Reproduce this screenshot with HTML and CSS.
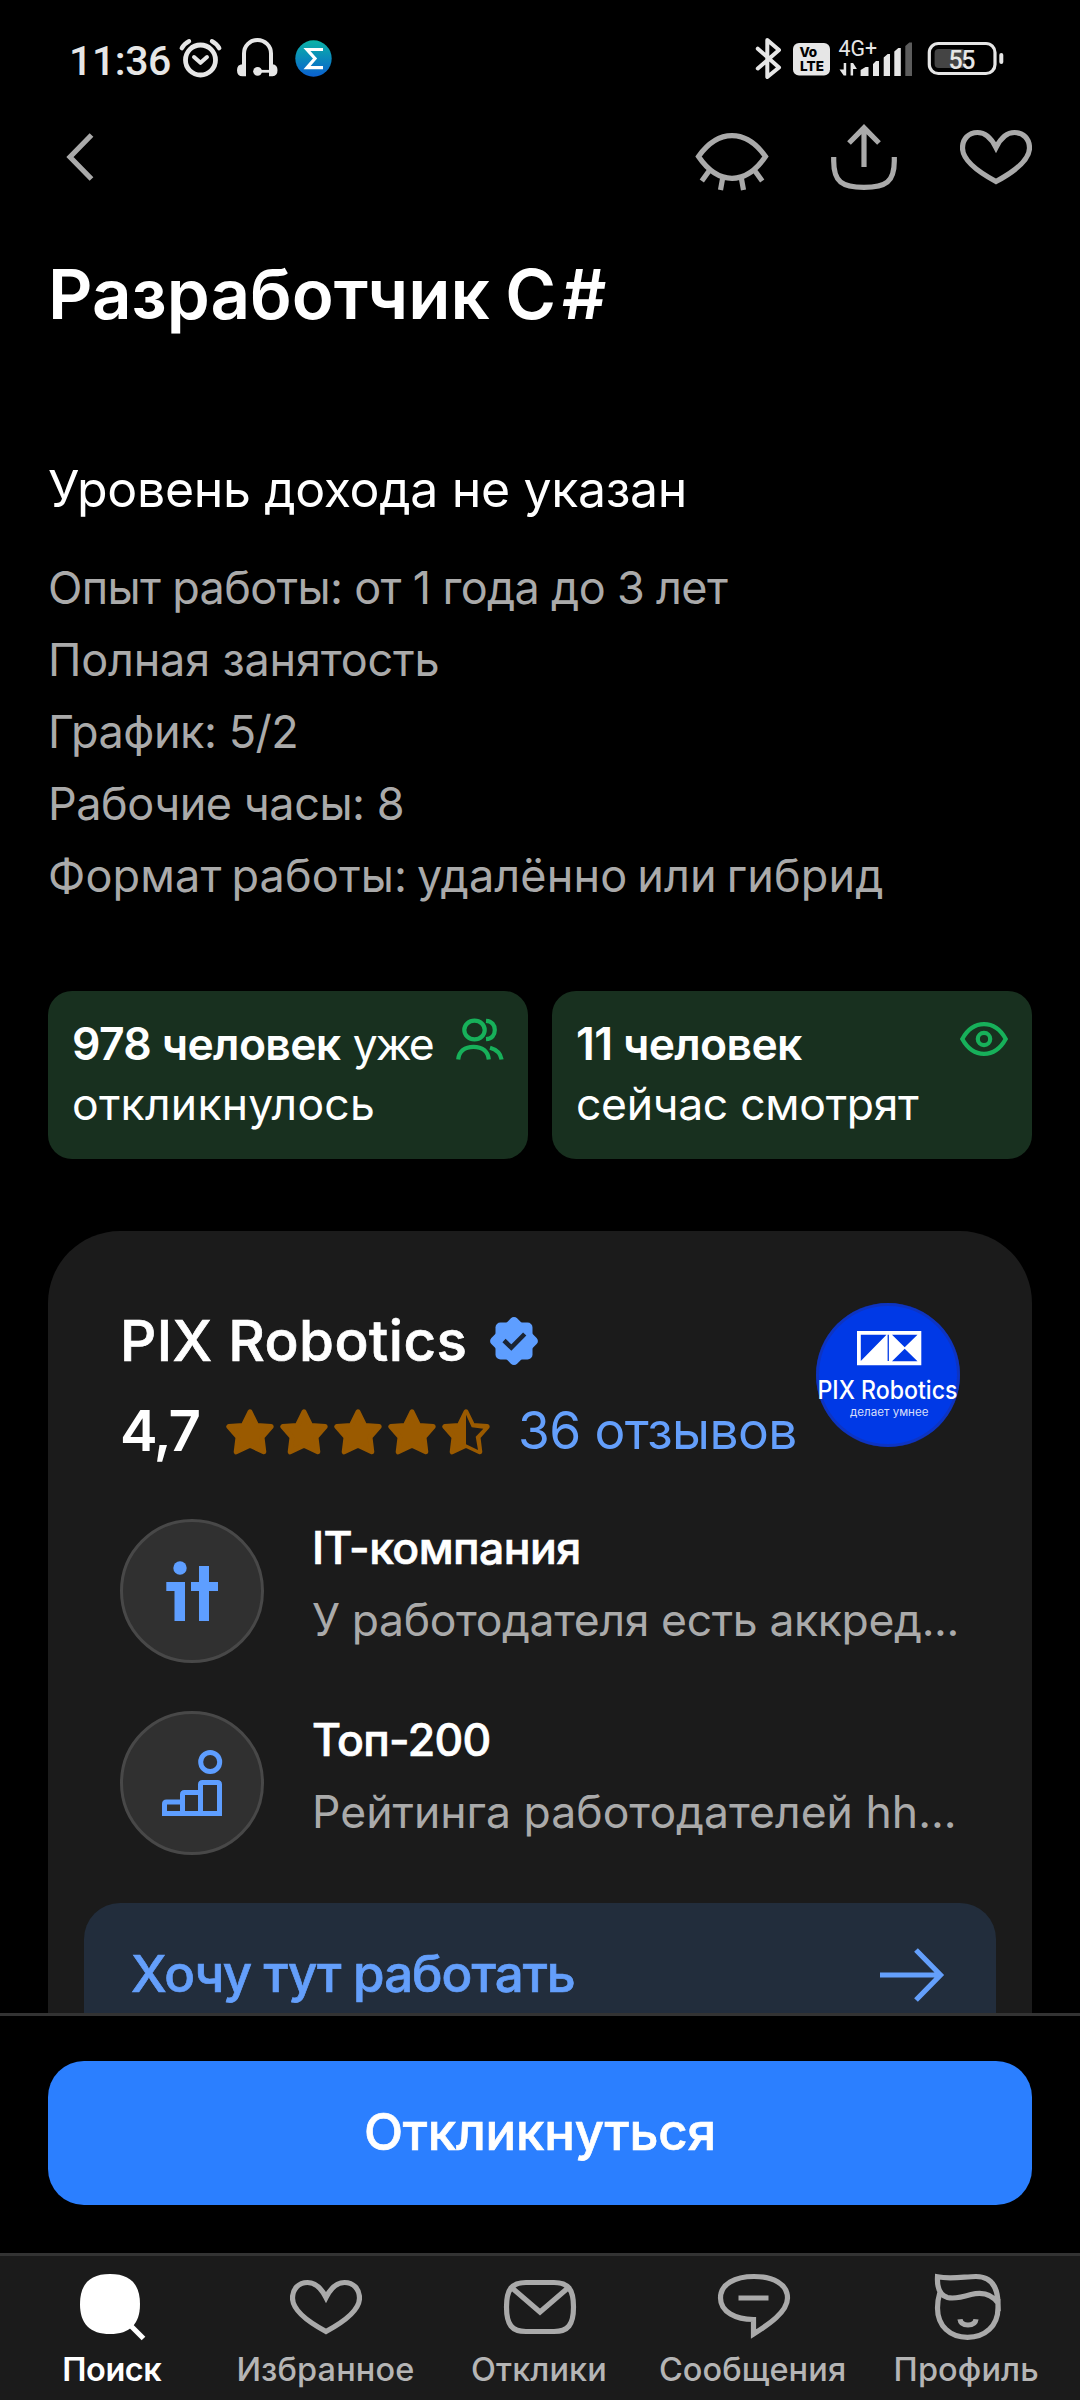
FILE: index.html
```html
<!DOCTYPE html>
<html lang="ru">
<head>
<meta charset="utf-8">
<title>Разработчик C#</title>
<link rel="stylesheet" href="styles.css">
</head>
<body>
<svg class="defs" aria-hidden="true">
  <defs>
    <symbol id="heart" viewBox="0 0 72 72"><path d="M36 26.5C32 18.5 25.5 11.5 17.5 11.5C8.5 11.5 2.5 18 2.5 27C2.5 41 22 53 36 60.5C50 53 69.5 41 69.5 27C69.5 18 63.5 11.5 54.5 11.5C46.5 11.5 40 18.5 36 26.5Z"/></symbol>
    <symbol id="star" viewBox="0 0 48 48"><path class="star-shape" d="M24 3.8L30.6 17.4L45.2 18.6L36 29.2L37.8 43.8L24 37.2L10.2 43.8L12 29.2L2.8 18.6L17.4 17.4Z"/></symbol>
  </defs>
</svg>

<header class="status-bar">
  <div class="status-left">
    <span class="clock">11:36</span>
    <svg class="status-icon" viewBox="0 0 48 48" fill="none" stroke="#e6e6e6" stroke-linecap="round">
      <circle cx="23.5" cy="26" r="15" stroke-width="4.8"/>
      <path d="M17 23l6.5 5.8L30 23" stroke-width="4" stroke-linejoin="round"/>
      <path d="M4.8 14.2Q7.5 9.5 12 7.3M42.2 14.2Q39.5 9.5 35 7.3" stroke-width="4.4"/>
    </svg>
    <svg class="status-icon" viewBox="0 0 48 48" fill="#e6e6e6">
      <path d="M11 36V19.5a13.5 13.5 0 0 1 27 0V36" fill="none" stroke="#e6e6e6" stroke-width="4"/>
      <path d="M13 30v12.3h-3.5q-5.5 0-5.5-6t5.5-6zM36 30v12.3h3.5q5-0.5 5-6t-5-6z"/>
      <circle cx="24.6" cy="37.3" r="4.4"/>
      <path d="M24 35.9h16v2.8H24z"/>
    </svg>
    <svg class="status-icon" viewBox="0 0 48 48">
      <defs><linearGradient id="sigma-bg" x1="0" y1="0" x2="0" y2="1"><stop offset="0" stop-color="#0bb3a6"/><stop offset="1" stop-color="#0a60d0"/></linearGradient></defs>
      <circle cx="24.5" cy="24.5" r="18.2" fill="url(#sigma-bg)"/>
      <path d="M34 15.5H18L26 24.5L18 33.7H34" fill="none" stroke="#fff" stroke-width="3.2"/>
    </svg>
  </div>
  <div class="status-right">
    <svg class="bluetooth" viewBox="0 0 30 48" fill="none" stroke="#e6e6e6" stroke-width="4" stroke-linejoin="round" stroke-linecap="round"><path d="M3.8 14.7L25 33.5L13.3 43V6L25 16L3.8 34.5"/></svg>
    <svg class="volte" viewBox="0 0 37 48">
      <rect y="9" width="37" height="32.5" rx="6" fill="#e6e6e6"/>
      <text x="6.5" y="23.3" textLength="17.5">Vo</text>
      <text x="7" y="37" textLength="24">LTE</text>
    </svg>
    <svg class="signal" viewBox="0 0 78 48" fill="#e6e6e6">
      <text x="0.5" y="21.7" textLength="38.5" lengthAdjust="spacingAndGlyphs">4G+</text>
      <path d="M5.7 29h2.5v12.5h-2.5L1.5 35.5h4.2zM12.6 41.5V29h2.5l3.8 6h-3.8v6.5z"/>
      <path d="M22.6 36l5-3h2.9v9h-7.9zM35 30l3-3h3v15h-6zM45.7 23.5l4-3.5H52v22h-6.3zM56.3 17.5l4-3.5h2.5v28h-6.5z"/>
      <path d="M67.3 12l4-3.5H74V42h-6.7z" fill="#5c5c5c"/>
    </svg>
    <svg class="battery" viewBox="0 0 78 48">
      <rect x="7.6" y="15" width="30.5" height="19" rx="4" fill="#444"/>
      <rect x="2.3" y="9.5" width="65.7" height="30" rx="9" fill="none" stroke="#e6e6e6" stroke-width="3.2"/>
      <rect x="72.3" y="19" width="4" height="11" rx="2" fill="#e6e6e6"/>
      <text x="21.5" y="35" textLength="27">55</text>
    </svg>
  </div>
</header>

<nav class="app-bar">
  <svg class="icon" viewBox="0 0 72 72"><path d="M43.5 14L22 36L43.5 58"/></svg>
  <div class="app-actions">
    <svg class="icon" viewBox="0 0 72 72"><path d="M2.5 35.5C10 25 21 14.7 36 14.7S62 25 69.5 35.5C62 46.5 51 57.3 36 57.3S10 46.5 2.5 35.5ZM13 50L5.8 60M26.5 58L24.5 69M45.5 58L47.5 69M59 50L66.2 60"/></svg>
    <svg class="icon" viewBox="0 0 72 72"><path d="M36 46V7M21 22L36 6.8L51 22M5.7 36V40C5.7 61 14 66.3 36 66.3S66.3 61 66.3 40V36"/></svg>
    <svg class="icon"><use href="#heart"/></svg>
  </div>
</nav>

<main class="content">
  <h1 class="title">Разработчик <span class="title-lang">C#</span></h1>
  <p class="income">Уровень дохода не указан</p>
  <ul class="details">
    <li class="tight">Опыт работы: от 1 года до 3 лет</li>
    <li>Полная занятость</li>
    <li class="snug">График: 5/2</li>
    <li class="snug">Рабочие часы: 8</li>
    <li class="format">Формат работы: удалённо или гибрид</li>
  </ul>

  <div class="stats">
    <div class="stat">
      <p><b>978 человек</b> <span class="stat-word">уже</span><br><span class="wide">откликнулось</span></p>
      <svg class="stat-icon" viewBox="0 0 48 48"><ellipse cx="18.5" cy="15" rx="10.2" ry="9.4"/><path d="M30 5.8C36 6.2 38.8 10 38.8 15S36 23.8 30 24.2M2.2 44.5C3 36 9 31.8 17.5 31.8S32 36 32.8 44.5M34 32.8C40 34.5 44.5 38 45.6 44.5"/></svg>
    </div>
    <div class="stat">
      <p><b>11 человек</b><br>сейчас смотрят</p>
      <svg class="stat-icon" viewBox="0 0 48 48"><path d="M2.3 24C7 15.5 14.5 9.2 24 9.2S41 15.5 45.7 24C41 32.5 33.5 38.8 24 38.8S7 32.5 2.3 24Z"/><circle cx="24" cy="24" r="6.2"/></svg>
    </div>
  </div>

  <section class="company">
    <div class="company-head">
      <div class="company-info">
        <div class="company-name">
          <h2>PIX Robotics</h2>
          <svg class="verified" viewBox="0 0 48 48"><rect x="5.5" y="5.5" width="37" height="37" rx="5"/><rect x="5.8" y="5.8" width="36.4" height="36.4" rx="4.4" transform="rotate(45 24 24)"/><path d="M14 23.5L21.3 30.5L34.7 17"/></svg>
        </div>
        <div class="rating">
          <span class="score">4,7</span>
          <span class="stars">
            <svg><use href="#star"/></svg><svg><use href="#star"/></svg><svg><use href="#star"/></svg><svg><use href="#star"/></svg>
            <svg viewBox="0 0 48 48"><use href="#star"/><path class="star-hollow" d="M24 6.7L29.7 19.3L41.3 20.7L33.7 28.7L36 42L24 36.3Z"/></svg>
          </span>
          <a class="reviews">36 отзывов</a>
        </div>
      </div>
      <svg class="logo" viewBox="0 0 144 144">
        <circle cx="72" cy="72" r="72" fill="#0039e6"/>
        <circle cx="72" cy="72" r="70.5" fill="none" stroke="#1a2f9e" stroke-opacity=".5" stroke-width="3"/>
        <path d="M41 28h64.3v34.2H41z" fill="#fff"/>
        <path d="M44.8 31.8H70.5L44.8 58ZM71.6 31.8h1.3V58h-1.3zM76 31.8h25.5L88.7 44.3ZM76 58.2h25.5L88.7 45.7Z" fill="#0039e6"/>
        <text class="logo-name" x="1.5" y="96.3" textLength="140" lengthAdjust="spacingAndGlyphs">PIX Robotics</text>
        <text class="logo-tag" x="34" y="113.3" textLength="78.5" lengthAdjust="spacingAndGlyphs">делает умнее</text>
      </svg>
    </div>

    <div class="fact">
      <svg class="fact-icon" viewBox="0 0 144 144"><circle class="disc" cx="72" cy="72" r="70.5"/><circle class="solid" cx="60" cy="49" r="6.7"/><path class="solid" d="M46.3 63H65v39H54.5V72h-8.2zM79 47h10v16h9v9h-9v30H79V72h-8v-9h8z"/></svg>
      <div class="fact-text"><h3>IT-компания</h3><p>У работодателя есть аккред...</p></div>
    </div>
    <div class="fact">
      <svg class="fact-icon" viewBox="0 0 144 144"><circle class="disc" cx="72" cy="72" r="70.5"/><circle class="line" cx="90.2" cy="51" r="9.5"/><path class="line" d="M44.5 102.5V93Q44.5 91 46.5 91H62.5M62.5 102.5V83.5Q62.5 81.5 64.5 81.5H80.5M80.5 102.5V73.5Q80.5 71.5 82.5 71.5H97.5Q99.5 71.5 99.5 73.5V102.5H42"/></svg>
      <div class="fact-text"><h3 class="fact-top">Топ-200</h3><p class="wide">Рейтинга работодателей hh...</p></div>
    </div>

    <div class="want">
      <span class="want-label">Хочу тут работать</span>
      <svg class="icon" viewBox="0 0 72 72"><path d="M4 36H64M40 11L64.5 36L40 61"/></svg>
    </div>
  </section>
</main>

<div class="apply-bar"><button class="apply">Откликнуться</button></div>

<nav class="tabs">
  <a class="tab active">
    <svg class="icon" viewBox="0 0 72 72"><path class="blob" d="M33 3C53 3 63 13 63 33S53 63 33 63S3 53 3 33S13 3 33 3Z"/><path d="M50 51L66.5 67.5"/></svg>
    <span>Поиск</span>
  </a>
  <a class="tab"><svg class="icon"><use href="#heart"/></svg><span>Избранное</span></a>
  <a class="tab">
    <svg class="icon" viewBox="0 0 72 72"><path d="M22 11.5H50C64 11.5 69.5 18 69.5 36S64 60.5 50 60.5H22C8 60.5 2.5 54 2.5 36S8 11.5 22 11.5ZM7.5 16.5L36 41L64.5 16.5"/></svg>
    <span>Отклики</span>
  </a>
  <a class="tab">
    <svg class="icon" viewBox="0 0 72 72"><path d="M35.5 48.5V63C50 54 69.5 41 69.5 27C69.5 13 55 5.5 36 5.5S2.5 13 2.5 27C2.5 41 18 48.5 35.5 48.5ZM20.5 27H50.5"/></svg>
    <span>Сообщения</span>
  </a>
  <a class="tab">
    <svg class="icon" viewBox="0 0 72 72"><path d="M6.5 5.8C20 8.5 34 5.5 45 5.5C60 5.5 66.5 15 67 32C60 22 50 21 40 23.5C30 26.5 23 28 16.5 26.5C8 24 6 15 6.5 5.8ZM9 21C7.5 26 6.5 31 6.5 37C6.5 55 19 66.3 36.5 66.3S67 55 67 37V28M29 48.3C29.5 52.5 33 54 37 54S44.5 52.5 45 48.3"/></svg>
    <span>Профиль</span>
  </a>
</nav>
</body>
</html>
```
FILE: styles.css
```css
* { box-sizing: border-box; margin: 0; padding: 0; }

body {
  width: 1080px;
  height: 2400px;
  display: flex;
  flex-direction: column;
  overflow: hidden;
  background: #000;
  color: #fff;
  font-family: Inter, "Liberation Sans", sans-serif;
}

svg { display: block; flex: none; }
.defs { width: 0; height: 0; position: absolute; }
ul { list-style: none; }
h2, h3, .want, .apply { font-weight: 500; -webkit-text-stroke: .7px currentColor; }

.icon {
  width: 72px;
  height: 72px;
  fill: none;
  stroke: #aaa;
  stroke-width: 5.2;
  overflow: visible;
}

/* System status bar */
.status-bar {
  flex: none;
  height: 116px;
  padding: 0 75px 0 69px;
  display: flex;
  justify-content: space-between;
  align-items: center;
  font-family: Roboto, sans-serif;
}
.status-left { display: flex; align-items: center; gap: 8px; }
.clock { width: 100px; font-size: 41px; font-weight: 500; line-height: 48px; letter-spacing: -.4px; color: #e6e6e6; padding-top: 5px; white-space: nowrap; }
.status-icon { width: 48px; height: 48px; }
.status-right { display: flex; align-items: center; }
.status-right svg { height: 48px; }
.bluetooth { width: 30px; margin-right: 9px; }
.volte { width: 37px; margin-right: 8px; font: 800 13.5px Inter, sans-serif; }
.signal { width: 78px; margin-right: 11px; font-size: 21.5px; }
.battery { width: 78px; font-size: 25px; font-weight: 500; fill: #e6e6e6; }

/* Screen toolbar */
.app-bar {
  flex: none;
  display: flex;
  justify-content: space-between;
  padding: 5px 48px 0;
}
.app-actions { display: flex; gap: 60px; }

/* Vacancy */
.content { flex: 1; min-height: 0; overflow: hidden; padding: 59px 48px 0; }
.title { font-size: 69px; font-weight: 600; line-height: 84px; letter-spacing: 0; word-spacing: -2px; }
.title-lang { letter-spacing: 6px; }
.income { margin-top: 123px; font-size: 50px; line-height: 60px; letter-spacing: -.35px; }
.details { margin-top: 33px; font-size: 45px; line-height: 72px; letter-spacing: -.2px; color: #aaa; }
.details .tight { letter-spacing: -.67px; }
.details .snug { letter-spacing: -.47px; }
.details .format { letter-spacing: .16px; word-spacing: -3px; }

.stats { margin-top: 79px; display: grid; grid-template-columns: 1fr 1fr; gap: 24px; }
.stat {
  height: 168px;
  padding: 23px 24px;
  display: flex;
  justify-content: space-between;
  border-radius: 24px;
  background: #18301f;
  font-size: 44.5px;
  line-height: 60px;
  letter-spacing: -.3px;
}
.stat p { white-space: nowrap; }
.stat b { font-weight: 600; letter-spacing: -.65px; }
.stat-word { letter-spacing: -2px; }
.stat .wide { letter-spacing: .25px; }
.stat-icon { width: 48px; height: 48px; margin-top: 1px; margin-left: -24px; fill: none; stroke: #17b05a; stroke-width: 4.2; }

/* Employer card */
.company { margin-top: 72px; padding: 72px 72px 0; height: 900px; border-radius: 72px 72px 0 0; background: #1b1b1b; }
.company-head { display: flex; justify-content: space-between; height: 216px; }
.company-info { padding-top: 2px; }
.company-name { display: flex; align-items: center; gap: 23px; height: 72px; }
.company-name h2 { font-size: 56.5px; line-height: 72px; letter-spacing: .46px; }
.verified { width: 48px; height: 48px; fill: #5e9eff; }
.verified path { fill: none; stroke: #1b2433; stroke-width: 4.6; }
.rating { display: flex; align-items: center; height: 72px; margin-top: 17px; white-space: nowrap; }
.score { width: 106px; font-size: 56.5px; font-weight: 600; letter-spacing: -2px; }
.stars { display: flex; gap: 6px; padding-top: 3px; }
.stars svg { width: 48px; height: 48px; }
.star-shape { fill: #9a5a00; stroke: #9a5a00; stroke-width: 5; stroke-linejoin: round; }
.star-hollow { fill: #1b1b1b; }
.reviews { margin-left: 28px; font-size: 51.5px; letter-spacing: -.6px; color: #649ffb; }
.logo { width: 144px; height: 144px; }
.logo text { fill: #fff; }
.logo-name { font-size: 25px; font-weight: 500; }
.logo-tag { font-size: 11px; fill-opacity: .85; }

.fact { display: flex; gap: 48px; height: 144px; }
.fact + .fact { margin-top: 48px; }
.fact-icon { width: 144px; height: 144px; }
.disc { fill: #303030; stroke: #484848; stroke-width: 3; }
.solid { fill: #5e9eff; }
.line { fill: none; stroke: #5e9eff; stroke-width: 5; }
.fact-text { margin-top: -7px; font-size: 44.5px; line-height: 72px; white-space: nowrap; }
.fact-text h3 { font-size: inherit; letter-spacing: -.55px; }
.fact-text .fact-top { letter-spacing: -.65px; }
.fact-text p { color: #aaa; letter-spacing: -.36px; }
.fact-text .wide { letter-spacing: .02px; }

.want {
  display: flex;
  justify-content: space-between;
  height: 168px;
  margin: 48px -36px 0;
  padding: 36px 48px 0 47px;
  border-radius: 36px;
  background: #222d3c;
  color: #649ffb;
  font-size: 51px;
  line-height: 70px;
  letter-spacing: -1px;
}
.want .icon { stroke: #649ffb; }

/* Apply button */
.apply-bar { flex: none; height: 240px; padding: 45px 48px 0; border-top: 3px solid #333; }
.apply {
  display: block;
  width: 100%;
  height: 144px;
  padding-bottom: 3px;
  border: 0;
  border-radius: 36px;
  background: #2b7fff;
  color: #fff;
  font-family: Inter, sans-serif;
  font-size: 51px;
  letter-spacing: -.2px;
}

/* Bottom navigation */
.tabs {
  flex: none;
  height: 147px;
  padding: 15px 6px 0;
  display: grid;
  grid-template-columns: repeat(5, 1fr);
  border-top: 3px solid #333;
  background: #1b1b1b;
}
.tab { display: flex; flex-direction: column; align-items: center; gap: 7px; color: #b5b5b5; font-size: 32.5px; font-weight: 500; line-height: 40px; letter-spacing: .1px; }
.tab span { margin-left: -2px; }
.active { color: #fff; font-weight: 600; letter-spacing: -.5px; }
.active .icon { stroke: #fff; }
.blob { fill: #fff; stroke: none; }
```
